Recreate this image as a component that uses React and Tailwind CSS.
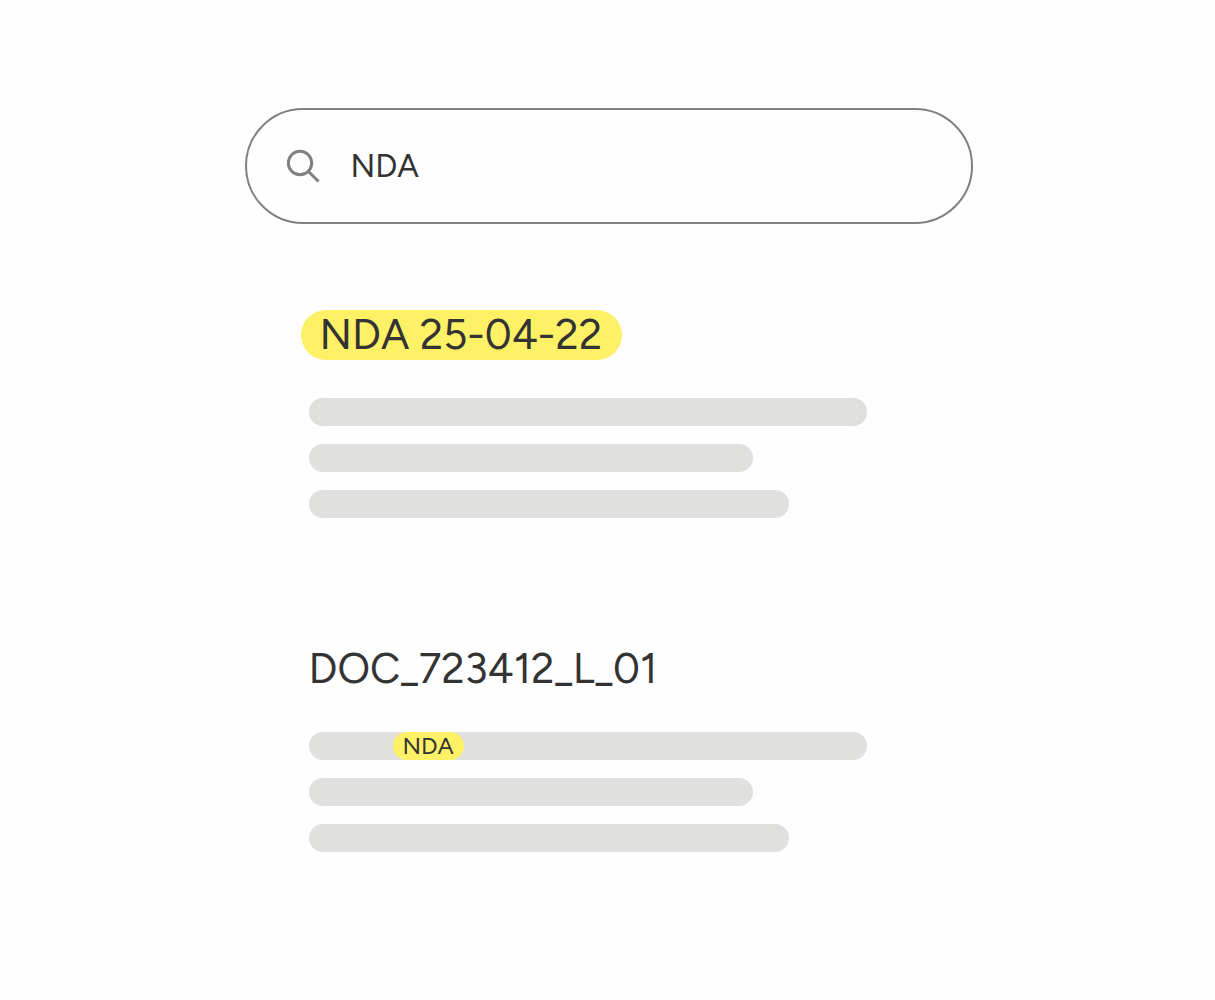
function Line({ width, children }) {
  return (
    <div className={`flex h-7 max-w-full items-center rounded-full bg-[#e0e0de] ${width}`}>
      {children}
    </div>
  );
}

function Result({ title, highlighted, match }) {
  return (
    <article>
      <h2 className="flex h-[50px] items-center text-[42px] leading-[50px]">
        {highlighted ? (
          <mark className="-ml-2 rounded-full bg-[#fff166] pr-5 pl-[19px] text-[#333333]">{title}</mark>
        ) : (
          title
        )}
      </h2>
      <div className="mt-[38px] flex flex-col gap-[18px]">
        <Line width="w-[558px]">
          {match && (
            <mark className="ml-[84px] rounded-full bg-[#fff166] px-[10px] text-2xl leading-7 text-[#333333]">
              {match}
            </mark>
          )}
        </Line>
        <Line width="w-[444px]" />
        <Line width="w-[480px]" />
      </div>
    </article>
  );
}

export default function App() {
  return (
    <main className="min-h-screen bg-[#fefefe] pt-[108px] pr-6 pb-36 pl-[26px] font-['Figtree','Inter',sans-serif] text-[#333333]">
      <div className="mx-auto max-w-[728px]">
        <form role="search" className="flex h-[116px] items-center rounded-full border-2 border-[#808080] px-10">
          <label htmlFor="search" aria-label="Search">
            <svg className="size-[34px]" viewBox="0 0 34 34" fill="none" stroke="#808080" strokeWidth="3">
              <circle cx="13" cy="14" r="11.7" />
              <path d="M21 22 31.5 32.5" />
            </svg>
          </label>
          <input id="search" type="text" defaultValue="NDA" className="ml-[30px] min-w-0 flex-1 bg-transparent text-[32px] leading-10 outline-none" />
        </form>
        <section className="mt-[86px] flex flex-col gap-[126px] pl-16">
          <Result title="NDA 25-04-22" highlighted />
          <Result title="DOC_723412_L_01" match="NDA" />
        </section>
      </div>
    </main>
  );
}
